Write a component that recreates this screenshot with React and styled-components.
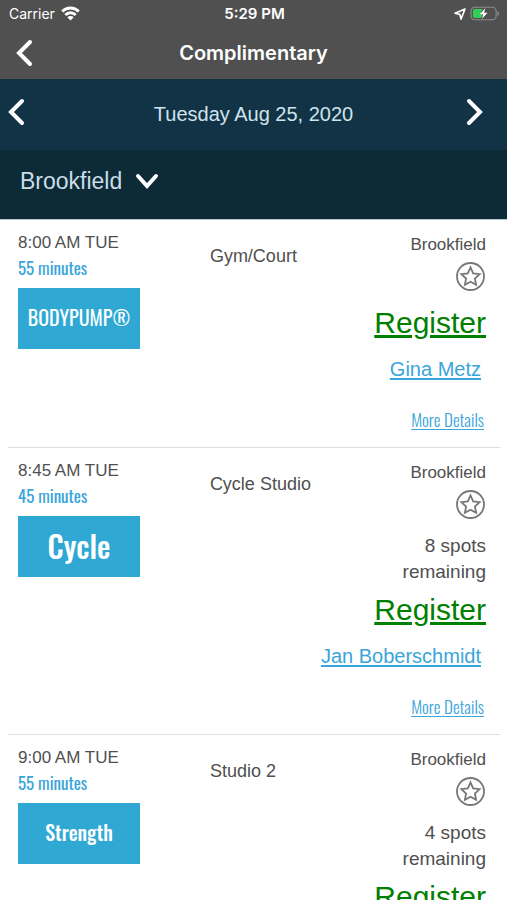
import React, {useState} from 'react';
import styled, {createGlobalStyle, ThemeProvider} from "styled-components";

const theme = {
    bar: "#505050",
    dateBar: "#113345",
    locationBar: "#0d2a37",
    accent: "#2fa9d4",
    link: "#39a5da",
    text: "#4f4f4f",
    line: "#dedede",
    condensed: 'Oswald, "Roboto Condensed", Roboto, sans-serif',
};

const GlobalStyle = createGlobalStyle`
  body {
    margin: 0;
    background: #fff;
    font-family: "Liberation Sans", Arial, sans-serif;
  }

  button, select {
    font: inherit;
    color: inherit;
    background: none;
    border: 0;
    padding: 0;
    margin: 0;
  }

  svg {
    display: block;
  }
`;

const Screen = styled.div`
  display: flex;
  flex-direction: column;
  height: 100vh;
`;

// top bar (status + title)
const TopBar = styled.header`
  background: ${props => props.theme.bar};
  color: #fff;
  font-family: Inter, Roboto, sans-serif;
`;

const ThreeColumns = styled.div`
  display: grid;
  grid-template-columns: 1fr auto 1fr;
  align-items: center;
`;

const StatusBar = styled(ThreeColumns)`
  height: 27px;
  padding: 0 7px 0 9px;
  font-size: 14px;
`;

const Side = styled.div`
  display: flex;
  align-items: center;
  gap: ${props => props.gap || 0}px;
  justify-content: ${props => props.end ? "flex-end" : "flex-start"};
`;

const Clock = styled.span`
  font-size: 15px;
  font-weight: 600;
`;

const TitleBar = styled(ThreeColumns)`
  height: 52px;
  padding: 0 16px;
`;

const Title = styled.h1`
  margin: 0;
  font-size: 20px;
  font-weight: 600;
`;

const IconButton = styled.button`
  cursor: pointer;
`;

const DateBar = styled(ThreeColumns)`
  height: 71px;
  padding: 0 8px;
  background: ${props => props.theme.dateBar};
  color: #fff;
`;

const DayButton = styled(IconButton)`
  padding: 0 ${props => props.next ? 15 : 0}px 6px 0;
`;

const DateText = styled.span`
  font-size: 20px;
  color: #cfe3ee;
`;

const LocationBar = styled.div`
  display: flex;
  align-items: center;
  box-sizing: border-box;
  height: 70px;
  padding: 0 20px 8px;
  border-bottom: 1px solid #b9cbd6;
  background: ${props => props.theme.locationBar};
  color: #fff;
`;

const LocationLabel = styled.label`
  display: flex;
  align-items: center;
  gap: 12px;
`;

const LocationSelect = styled.select`
  appearance: none;
  font-size: 23px;
  color: #cbdde8;
`;

const ClassList = styled.ul`
  flex: 1;
  min-height: 0;
  margin: 0;
  padding: 0 7px 0 8px;
  list-style: none;
  overflow-y: auto;
  scrollbar-width: none;
`;

const ClassRow = styled.li`
  display: grid;
  grid-template-columns: 41% 1fr auto;
  padding: 11px 14px 15px 10px;
  border-bottom: 1px solid ${props => props.theme.line};
  color: ${props => props.theme.text};
`;

const Time = styled.div`
  font-size: 17px;
  line-height: 24px;
`;

const Duration = styled.div`
  font-family: ${props => props.theme.condensed};
  font-size: 17px;
  line-height: 26px;
  color: ${props => props.theme.link};
`;

const Tile = styled.div`
  display: flex;
  align-items: center;
  justify-content: center;
  box-sizing: border-box;
  width: 122px;
  height: 61px;
  margin-top: 7px;
  padding-bottom: 3px;
  background: ${props => props.theme.accent};
  color: #fff;
  font-family: ${props => props.theme.condensed};
  font-size: ${props => props.size}px;
  font-weight: ${props => props.light ? 400 : 500};
`;

const Room = styled.div`
  margin-top: 15px;
  font-size: 18px;
  line-height: 20px;
`;

const Actions = styled.div`
  display: flex;
  flex-direction: column;
  align-items: flex-end;
`;

const Club = styled.div`
  font-size: 17px;
  line-height: 28px;
`;

const StarButton = styled(IconButton)`
  margin: 3px 0 14px;
  color: #777;
`;

const Spots = styled.div`
  display: flex;
  flex-direction: column;
  align-items: flex-end;
  margin-bottom: 7px;
  font-size: 19px;
  line-height: 26px;
`;

const Link = styled.a`
  text-underline-offset: 2px;
`;

const RegisterLink = styled(Link)`
  font-size: 30px;
  line-height: 36px;
  color: #008000;
`;

const InstructorLink = styled(Link)`
  margin: 14px 5px 25px 0;
  font-size: 20px;
  line-height: 28px;
  color: ${props => props.theme.link};
`;

const DetailsLink = styled(Link)`
  margin-right: 2px;
  font-family: ${props => props.theme.condensed};
  font-size: 17px;
  font-weight: 300;
  line-height: 24px;
  color: ${props => props.theme.link};
`;

const chevrons = {
    left: {w: 18, h: 28, d: "M14 3 3 14l11 11"},
    right: {w: 18, h: 28, d: "M3 3l11 11L3 25"},
    down: {w: 24, h: 18, d: "M3 4l9 10 9-10"},
};

function Chevron({to}) {
    const {w, h, d} = chevrons[to];
    return (
        <svg width={w} height={h} viewBox={`0 0 ${w} ${h}`} fill="none" stroke="currentColor"
             strokeWidth="4" strokeLinecap="round" aria-hidden="true">
            <path d={d}/>
        </svg>
    );
}

function Wifi() {
    return (
        <svg width="19" height="15" viewBox="0 0 19 15" fill="none" stroke="currentColor" strokeWidth="2.8"
             aria-label="Wi-Fi">
            <path d="M1.2 5.4a11.8 11.8 0 0 1 16.6 0"/>
            <path d="M4.3 8.9a7.4 7.4 0 0 1 10.4 0"/>
            <path d="M9.5 14.5 6.3 11.3a4.5 4.5 0 0 1 6.4 0z" fill="currentColor" stroke="none"/>
        </svg>
    );
}

function LocationArrow() {
    return (
        <svg width="12" height="12" viewBox="0 0 12 12" fill="none" stroke="currentColor" strokeWidth="1.6"
             strokeLinejoin="round" aria-hidden="true">
            <path d="M11 1 1 5.2l4.8 1.2 1.2 4.7z"/>
        </svg>
    );
}

function Battery() {
    return (
        <svg width="30" height="15" viewBox="0 0 31 15" aria-label="Battery charging">
            <rect x="1" y="1" width="26" height="13" rx="4" fill="none" stroke="#8c8c8c" strokeWidth="1.2"/>
            <path d="M28.4 5v5c1-.4 1.7-1.4 1.7-2.5S29.4 5.4 28.4 5z" fill="#8c8c8c"/>
            <path d="M5 2.8h8L10.5 8H13l-1.5 4.2H5A2 2 0 0 1 3 10V5a2 2 0 0 1 2-2.2z" fill="#30cf58"/>
            <path d="M15.8 2 10 8.2h3.6L12.4 13l5.8-6.4h-3.6z" fill="#fff"/>
        </svg>
    );
}

function CircledStar({filled}) {
    return (
        <svg width="31" height="29" viewBox="0 0 31 29" fill="none" stroke="currentColor" strokeWidth="1.8"
             aria-hidden="true">
            <circle cx="15.5" cy="14.5" r="13.5"/>
            <path d="M15.5 5.4l2.7 5.9 6.4.8-4.7 4.4 1.2 6.4-5.6-3.1-5.6 3.1 1.2-6.4-4.7-4.4 6.4-.8z"
                  fill={filled ? "currentColor" : "none"}/>
        </svg>
    );
}

const classes = [
    {time: "8:00 AM TUE", minutes: 55, name: "BODYPUMP®", size: 20, light: true, room: "Gym/Court", instructor: "Gina Metz"},
    {time: "8:45 AM TUE", minutes: 45, name: "Cycle", size: 30, room: "Cycle Studio", spots: 8, instructor: "Jan Boberschmidt"},
    {time: "9:00 AM TUE", minutes: 55, name: "Strength", size: 20, room: "Studio 2", spots: 4},
];

function ClassItem({item}) {
    const [starred, setStarred] = useState(false);
    return (
        <ClassRow>
            <div>
                <Time>{item.time}</Time>
                <Duration>{`${item.minutes} minutes`}</Duration>
                <Tile size={item.size} light={item.light}>{item.name}</Tile>
            </div>
            <Room>{item.room}</Room>
            <Actions>
                <Club>Brookfield</Club>
                <StarButton aria-label={`Favorite ${item.name}`} aria-pressed={starred}
                            onClick={() => setStarred(!starred)}>
                    <CircledStar filled={starred}/>
                </StarButton>
                {item.spots && <Spots><span>{`${item.spots} spots`}</span><span>remaining</span></Spots>}
                <RegisterLink href="#register">Register</RegisterLink>
                {item.instructor && <>
                    <InstructorLink href="#instructor">{item.instructor}</InstructorLink>
                    <DetailsLink href="#details">More Details</DetailsLink>
                </>}
            </Actions>
        </ClassRow>
    );
}

function App() {
    return (
        <ThemeProvider theme={theme}>
            <GlobalStyle/>
            <Screen>
                <TopBar>
                    <StatusBar>
                        <Side gap={6}>Carrier <Wifi/></Side>
                        <Clock>5:29 PM</Clock>
                        <Side end gap={4}><LocationArrow/><Battery/></Side>
                    </StatusBar>
                    <TitleBar>
                        <Side><IconButton aria-label="Back"><Chevron to="left"/></IconButton></Side>
                        <Title>Complimentary</Title>
                    </TitleBar>
                </TopBar>
                <DateBar>
                    <Side><DayButton aria-label="Previous day"><Chevron to="left"/></DayButton></Side>
                    <DateText>Tuesday Aug 25, 2020</DateText>
                    <Side end><DayButton next aria-label="Next day"><Chevron to="right"/></DayButton></Side>
                </DateBar>
                <LocationBar>
                    <LocationLabel>
                        <LocationSelect aria-label="Location">
                            <option>Brookfield</option>
                        </LocationSelect>
                        <Chevron to="down"/>
                    </LocationLabel>
                </LocationBar>
                <ClassList>
                    {classes.map(item => <ClassItem key={item.time} item={item}/>)}
                </ClassList>
            </Screen>
        </ThemeProvider>
    );
}

export default App;
